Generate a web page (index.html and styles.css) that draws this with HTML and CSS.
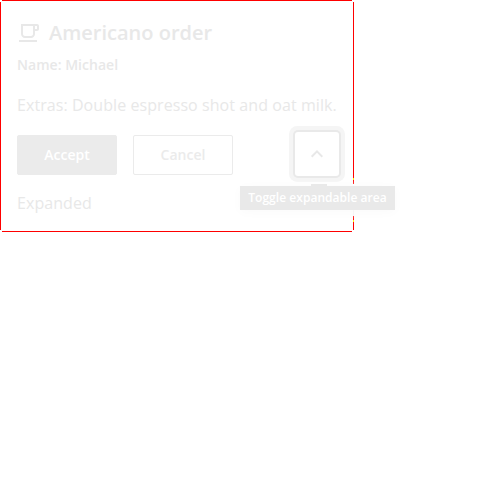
FILE: index.html
```html
<!DOCTYPE html>
<html lang="en">
<head>
<meta charset="utf-8">
<title>Americano order</title>
<link rel="stylesheet" href="styles.css">
</head>
<body>
<article class="card">
  <header class="head">
    <svg class="cup" width="24" height="24" viewBox="0 0 24 24" fill="currentColor">
      <path d="M20 3H4v10c0 2.21 1.79 4 4 4h6c2.21 0 4-1.79 4-4v-3h2c1.11 0 2-.89 2-2V5c0-1.11-.89-2-2-2zm-4 10c0 1.1-.9 2-2 2H8c-1.1 0-2-.9-2-2V5h10v8zm4-5h-2V5h2v3zM2 19h18v2H2z"/>
    </svg>
    <h1 class="title">Americano order</h1>
  </header>
  <p class="name">Name: Michael</p>
  <p class="extras">Extras: Double espresso shot and oat milk.</p>
  <div class="actions">
    <button class="button primary">Accept</button>
    <button class="button secondary">Cancel</button>
    <div class="toggle-wrap">
      <button class="toggle" aria-label="Toggle expandable area">
        <svg width="24" height="24" viewBox="0 0 24 24" fill="none" stroke="currentColor" stroke-width="2"><path d="M6.7 14.7L12 9.4L17.3 14.7"/></svg>
      </button>
      <div class="tooltip" role="tooltip">Toggle expandable area</div>
    </div>
  </div>
  <p class="expanded">Expanded</p>
  <i class="edge top"></i><i class="edge right"></i><i class="edge bottom"></i><i class="edge left"></i>
</article>
</body>
</html>
```
FILE: styles.css
```css
* { box-sizing: border-box; }
body { margin: 0; background: #fff; font-family: "Open Sans", sans-serif; }
.card { position: relative; width: 354px; height: 232px; padding: 17px; color: #e8e8e8; }
.edge { position: absolute; background: #f00; }
.top { top: 0; left: 2px; right: 2px; height: 1px; }
.bottom { bottom: 0; left: 2px; right: 2px; height: 1px; }
.left { left: 0; top: 2px; bottom: 2px; width: 1px; }
.right {
  right: 0; top: 2px; bottom: 2px; width: 1px; z-index: 0;
  background: linear-gradient(#f00 176px, #fe0 176px 178px, #f00 178px 182px, #fff 182px 208px, #f2f2f2 208px 214px, #f00 214px 218px, #fe0 218px 220px, #f00 220px);
}
.head { display: flex; align-items: center; gap: 8px; height: 32px; }
.title { margin: 0; font-size: 20px; line-height: 32px; font-weight: 600; white-space: nowrap; }
.name { margin: 4px 0 0; font-size: 14px; line-height: 24px; font-weight: 600; letter-spacing: 0.03px; }
.extras { margin: 16px 0 0; font-size: 16px; line-height: 24px; letter-spacing: 0.07px; white-space: nowrap; }
.actions { display: flex; gap: 16px; height: 40px; margin-top: 18px; }
.button { width: 100px; height: 40px; padding: 0; border: 1px solid #ebebeb; border-radius: 2px; font: 600 14px/24px "Open Sans", sans-serif; }
.primary { background: #ebebeb; color: #fff; }
.secondary { background: #fff; color: #ebebeb; }
.toggle-wrap { position: relative; margin-left: auto; width: 40px; height: 40px; z-index: 1; }
.toggle { display: grid; place-items: center; width: 44px; height: 44px; margin: -3px -2px; padding: 0; border: 0; border-radius: 3px; background: #fff; color: #e8e8e8; box-shadow: 0 0 0 2px #e9e9e9, 0 0 0 6px #f5f5f5; }
.toggle svg { width: 24px; height: 24px; }
.tooltip { position: absolute; left: -57px; top: 51px; width: 155px; height: 24px; background: #e9e9e9; color: #fff; font-size: 12px; line-height: 24px; font-weight: 600; letter-spacing: 0.04px; text-align: center; white-space: nowrap; box-shadow: 0 2px 12px #fafafa; }
.tooltip::before { content: ""; position: absolute; left: 71px; top: -2px; width: 16px; height: 2px; background: #e9e9e9; }
.expanded { margin: 16px 0 0; font-size: 16px; line-height: 24px; letter-spacing: 0.07px; }
```
